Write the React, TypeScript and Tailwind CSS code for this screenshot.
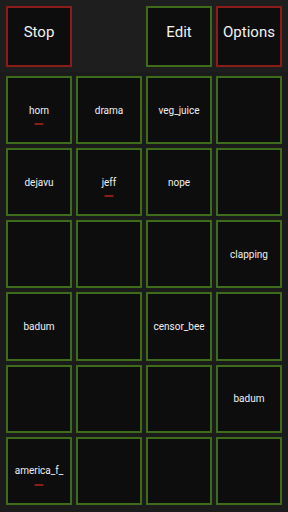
const labels: (string | null)[] = [
  'horn', 'drama', 'veg_juice', null,
  'dejavu', 'jeff', 'nope', null,
  null, null, null, 'clapping',
  'badum', null, 'censor_bee', null,
  null, null, null, 'badum',
  'america_f_', null, null, null,
];

// cells that show the little red "playing" bar under the label
const marked = new Set([0, 5, 20]);

function TopButton({ label, tone }: { label: string; tone: 'red' | 'green' }) {
  const border = tone === 'red' ? 'border-[#8a1c1a]' : 'border-[#3f6c1b]';
  return (
    <div className={`flex h-[61px] items-center justify-center border-2 ${border} bg-[#0d0d0d] pb-[8px] text-[15px] text-[#f2f2f2]`}>
      {label}
    </div>
  );
}

export default function App() {
  return (
    <div
      className="flex h-[512px] w-[288px] flex-col bg-[#1b1b1b]"
      style={{ fontFamily: 'Roboto, "Liberation Sans", sans-serif' }}
    >
      {/* Header */}
      <div className="grid grid-cols-4 gap-1 bg-[#1e1e1e] px-[6px] pt-[6px] pb-[5px]">
        <TopButton label="Stop" tone="red" />
        <div />
        <TopButton label="Edit" tone="green" />
        <TopButton label="Options" tone="red" />
      </div>

      {/* Sound grid */}
      <div className="grid flex-1 grid-cols-4 grid-rows-6 gap-1 px-[6px] pt-[4px] pb-[7px]">
        {labels.map((l, i) => (
          <div
            key={i}
            className="relative flex items-center justify-center border-2 border-[#3f6c1b] bg-[#0d0d0d] text-[10px] text-[#f0f0f0]"
          >
            {l}
            {marked.has(i) && (
              <span className="absolute left-1/2 top-[45px] h-[2px] w-[9px] -translate-x-1/2 bg-[#8a1c1a]" />
            )}
          </div>
        ))}
      </div>
    </div>
  );
}
